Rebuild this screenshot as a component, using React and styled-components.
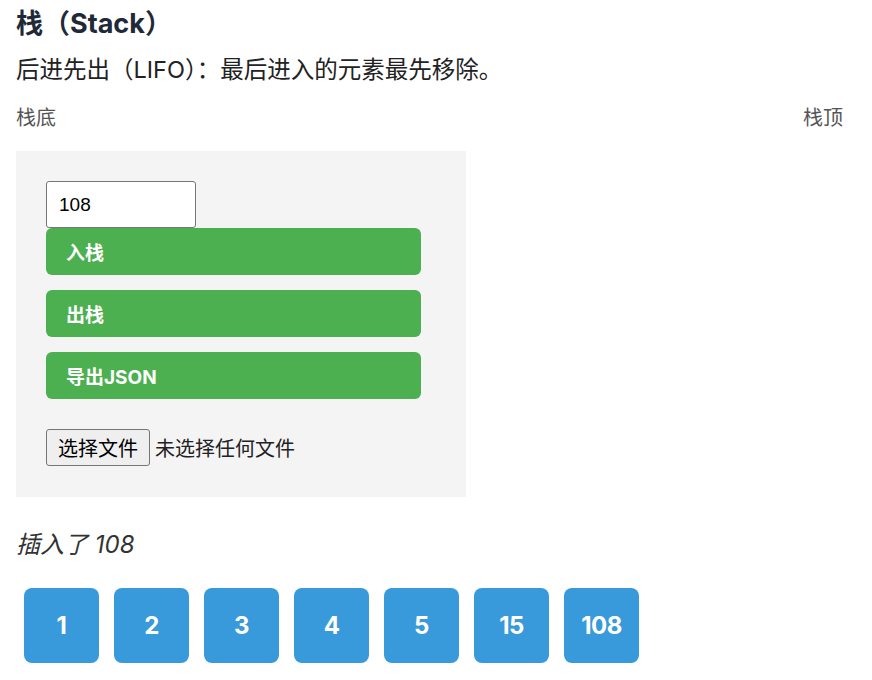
import React from 'react';
import styled, { createGlobalStyle } from 'styled-components';

const GlobalStyle = createGlobalStyle`
  body {
    margin: 0;
    background: #fff;
    font-family: Inter, "Noto Sans CJK SC", sans-serif;
  }
`;

const Page = styled.div`
  padding: 6px 16px 0 16px;
`;

const Title = styled.h2`
  margin: 0;
  font-size: 27px;
  line-height: 36px;
  font-weight: 700;
  color: #1f2937;
`;

const Subtitle = styled.p`
  margin: 11px 0 0;
  font-size: 23.5px;
  line-height: 34px;
  color: #222;
`;

const Ends = styled.div`
  display: flex;
  justify-content: space-between;
  padding-right: 13px;
  margin-top: 17px;
  font-size: 20px;
  line-height: 28px;
  color: #555;
`;

const Panel = styled.div`
  margin-top: 19px;
  width: 390px;
  padding: 30px 30px 31px;
  background: #f4f4f4;
  display: flex;
  flex-direction: column;
  align-items: flex-start;
`;

const ValueInput = styled.input`
  box-sizing: border-box;
  width: 150px;
  height: 47px;
  padding: 0 12px;
  font-family: "Liberation Sans", Arial, sans-serif;
  font-size: 19px;
  color: #000;
  border: 1px solid #767676;
  border-radius: 3px;
  background: #fff;
`;

const ActionButton = styled.button`
  box-sizing: border-box;
  width: 375px;
  height: 47px;
  margin-top: ${p => (p.$first ? '0' : '15px')};
  padding: 0 20px;
  text-align: left;
  border: none;
  border-radius: 6px;
  background: #4caf50;
  color: #fff;
  font-family: Inter, "Noto Sans CJK SC", sans-serif;
  font-size: 19px;
  font-weight: 700;
`;

const FileRow = styled.div`
  margin-top: 30px;
  display: flex;
  align-items: center;
  gap: 5px;
  font-family: "Liberation Sans", "Noto Sans CJK SC", sans-serif;
  font-size: 20px;
  color: #222;
`;

const FileButton = styled.button`
  box-sizing: border-box;
  height: 37px;
  padding: 0 11px;
  font-family: "Liberation Sans", "Noto Sans CJK SC", sans-serif;
  font-size: 20px;
  color: #000;
  background: #efefef;
  border: 1px solid #767676;
  border-radius: 3px;
`;

const Status = styled.p`
  margin: 31px 0 0;
  font-size: 24px;
  line-height: 34px;
  font-style: italic;
  color: #333;
`;

const StackRow = styled.div`
  display: flex;
  gap: 15px;
  margin: 26px 0 0 8px;
`;

const Item = styled.div`
  width: 75px;
  height: 75px;
  border-radius: 8px;
  background: #3899db;
  color: #fff;
  display: flex;
  align-items: center;
  justify-content: center;
  font-size: 24px;
  font-weight: 700;
  letter-spacing: -0.5px;
`;

const items = [1, 2, 3, 4, 5, 15, 108];

export default function App() {
  return (
    <>
      <GlobalStyle />
      <Page>
        <Title>栈（Stack）</Title>
        <Subtitle>后进先出（LIFO）：最后进入的元素最先移除。</Subtitle>
        <Ends>
          <span>栈底</span>
          <span>栈顶</span>
        </Ends>
        <Panel>
          <ValueInput defaultValue="108" />
          <ActionButton $first>入栈</ActionButton>
          <ActionButton>出栈</ActionButton>
          <ActionButton>导出JSON</ActionButton>
          <FileRow>
            <FileButton>选择文件</FileButton>
            <span>未选择任何文件</span>
          </FileRow>
        </Panel>
        <Status>插入了 108</Status>
        <StackRow>
          {items.map(v => (
            <Item key={v}>{v}</Item>
          ))}
        </StackRow>
      </Page>
    </>
  );
}
